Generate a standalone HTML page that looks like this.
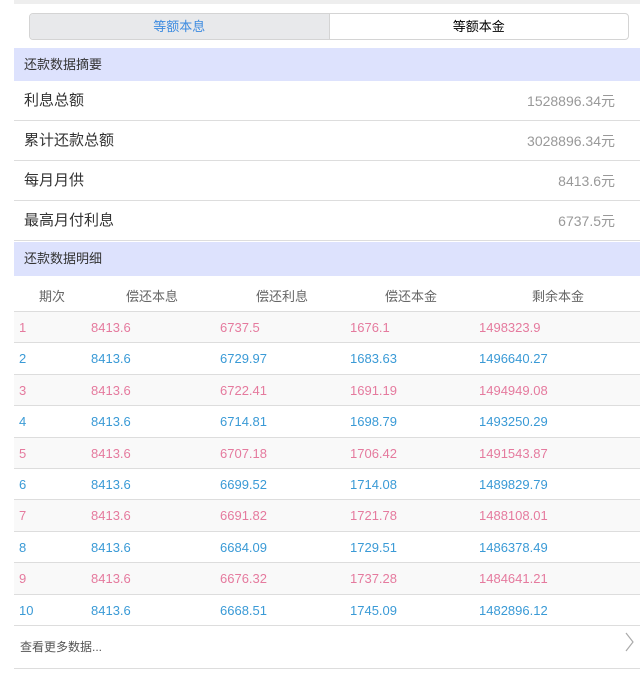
<!DOCTYPE html>
<html><head><meta charset="utf-8"><style>
*{margin:0;padding:0;box-sizing:border-box}
body{width:640px;height:673px;background:#fff;font-family:"Liberation Sans","Noto Sans CJK SC",sans-serif;position:relative;overflow:hidden}
.top{position:absolute;left:14px;top:0;width:626px;height:4px;background:#eee}
.tabs{position:absolute;left:29px;top:13px;width:600px;height:27px;border:1px solid #d4d4d4;border-radius:4px;display:flex;overflow:hidden;font-size:13px}
.tabs div{flex:1;text-align:center;line-height:25px}
.tabs .a{background:#e8e9eb;color:#3d8be0;border-right:1px solid #d4d4d4}
.hd{position:absolute;left:14px;width:626px;background:#dde2fd;font-size:13px;color:#333;padding-left:10px}
.row{position:absolute;left:14px;width:626px;height:40px;border-bottom:1px solid #ddd;font-size:15px;color:#333;line-height:40px;padding-left:10px}
.row span{position:absolute;right:25px;color:#999;font-size:14px}
.ch{position:absolute;left:14px;top:276px;width:626px;height:36px;border-bottom:1px solid #ddd;font-size:13px;color:#666}
.ch span{position:absolute;top:10px;transform:translateX(-50%)}
.dr{position:absolute;left:14px;width:626px;height:31.4px;border-bottom:1px solid #ddd;font-size:13px;line-height:31px}
.dr span{position:absolute}
.o{background:#f9f9f9;color:#e57a9e}.e{background:#fff;color:#3a9ad6}
.ft{position:absolute;left:14px;top:626px;width:626px;height:43px;border-bottom:1px solid #ddd;font-size:12px;color:#555;line-height:43px;padding-left:6px}
</style></head><body>
<div class="top"></div>
<div class="tabs"><div class="a">等额本息</div><div>等额本金</div></div>
<div class="hd" style="top:48px;height:33px;line-height:33px">还款数据摘要</div>
<div class="row" style="top:81px">利息总额<span>1528896.34元</span></div>
<div class="row" style="top:121px">累计还款总额<span>3028896.34元</span></div>
<div class="row" style="top:161px">每月月供<span>8413.6元</span></div>
<div class="row" style="top:201px">最高月付利息<span>6737.5元</span></div>
<div class="hd" style="top:242px;height:34px;line-height:34px">还款数据明细</div>
<div class="ch"><span style="left:38px">期次</span><span style="left:138px">偿还本息</span><span style="left:268px">偿还利息</span><span style="left:397px">偿还本金</span><span style="left:544px">剩余本金</span></div>
<div class="dr o" style="top:312px"><span style="left:5px">1</span><span style="left:77px">8413.6</span><span style="left:206px">6737.5</span><span style="left:336px">1676.1</span><span style="left:465px">1498323.9</span></div>
<div class="dr e" style="top:343.4px"><span style="left:5px">2</span><span style="left:77px">8413.6</span><span style="left:206px">6729.97</span><span style="left:336px">1683.63</span><span style="left:465px">1496640.27</span></div>
<div class="dr o" style="top:374.8px"><span style="left:5px">3</span><span style="left:77px">8413.6</span><span style="left:206px">6722.41</span><span style="left:336px">1691.19</span><span style="left:465px">1494949.08</span></div>
<div class="dr e" style="top:406.2px"><span style="left:5px">4</span><span style="left:77px">8413.6</span><span style="left:206px">6714.81</span><span style="left:336px">1698.79</span><span style="left:465px">1493250.29</span></div>
<div class="dr o" style="top:437.6px"><span style="left:5px">5</span><span style="left:77px">8413.6</span><span style="left:206px">6707.18</span><span style="left:336px">1706.42</span><span style="left:465px">1491543.87</span></div>
<div class="dr e" style="top:469px"><span style="left:5px">6</span><span style="left:77px">8413.6</span><span style="left:206px">6699.52</span><span style="left:336px">1714.08</span><span style="left:465px">1489829.79</span></div>
<div class="dr o" style="top:500.4px"><span style="left:5px">7</span><span style="left:77px">8413.6</span><span style="left:206px">6691.82</span><span style="left:336px">1721.78</span><span style="left:465px">1488108.01</span></div>
<div class="dr e" style="top:531.8px"><span style="left:5px">8</span><span style="left:77px">8413.6</span><span style="left:206px">6684.09</span><span style="left:336px">1729.51</span><span style="left:465px">1486378.49</span></div>
<div class="dr o" style="top:563.2px"><span style="left:5px">9</span><span style="left:77px">8413.6</span><span style="left:206px">6676.32</span><span style="left:336px">1737.28</span><span style="left:465px">1484641.21</span></div>
<div class="dr e" style="top:594.6px"><span style="left:5px">10</span><span style="left:77px">8413.6</span><span style="left:206px">6668.51</span><span style="left:336px">1745.09</span><span style="left:465px">1482896.12</span></div>
<div class="ft">查看更多数据...</div>
<svg style="position:absolute;left:624px;top:631px" width="12" height="22"><path d="M2 2 L9 11 L2 20" fill="none" stroke="#aaa" stroke-width="1.2"/></svg>
</body></html>
